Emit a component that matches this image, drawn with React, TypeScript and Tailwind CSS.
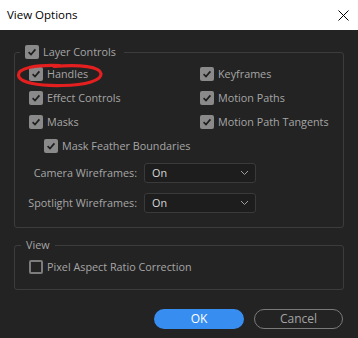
import React from "react";

const font = { fontFamily: '"Open Sans", "Noto Sans", sans-serif' };

function Check({ checked = true }: { checked?: boolean }) {
  if (!checked) {
    return <span className="block w-[14px] h-[14px] rounded-[2px] border-2 border-[#7c7c7c] shrink-0" />;
  }
  return (
    <span className="flex items-center justify-center w-[14px] h-[14px] rounded-[2px] bg-[#8a8a8a] shrink-0">
      <svg width="10" height="10" viewBox="0 0 10 10">
        <path d="M1.6 5.2 L4 7.5 L8.4 2.4" fill="none" stroke="#1e1e1e" strokeWidth="1.7" />
      </svg>
    </span>
  );
}

function Row({ label, indent = false }: { label: string; indent?: boolean }) {
  return (
    <div className={`flex items-center h-6 gap-[4px] whitespace-nowrap ${indent ? "pl-[15px]" : ""}`}>
      <Check />
      <span>{label}</span>
    </div>
  );
}

function Select({ label }: { label: string }) {
  return (
    <div className="flex items-center h-5 whitespace-nowrap">
      <span className="w-[123px] text-right pr-[1px]">{label}</span>
      <div className="ml-[6px] w-[112px] h-5 rounded-[3px] border border-[#3a3a3a] bg-[#1d1d1d] flex items-center justify-between pl-[7px] pr-[6px]">
        <span className="text-[#d8d8d8]">On</span>
        <svg width="9" height="6" viewBox="0 0 9 6">
          <path d="M1 1 L4.5 4.5 L8 1" fill="none" stroke="#a0a0a0" strokeWidth="1" />
        </svg>
      </div>
    </div>
  );
}

export default function App() {
  return (
    <div className="w-[358px] h-[338px] bg-[#232323] flex flex-col text-[10.8px] text-[#a6a6a6] overflow-hidden" style={font}>
      <div className="h-[30px] bg-white flex items-center justify-between pl-[7px] pr-[9px] text-black">
        <span className="text-[11.5px]">View Options</span>
        <svg width="11" height="11" viewBox="0 0 11 11">
          <path d="M0.5 0.5 L10.5 10.5 M10.5 0.5 L0.5 10.5" stroke="#000" strokeWidth="1" />
        </svg>
      </div>
      <div className="flex flex-col px-[14px] pt-[15px]">
        <div className="relative">
          <fieldset className="border border-[#3c3c3c] rounded-[3px] pl-[14px] pr-[14px] pb-[14px] m-0">
            <legend className="-ml-[9px] pl-[5px] pr-[8px] h-[14px]">
              <span className="flex items-center gap-[4px] h-[14px] whitespace-nowrap">
                <Check />
                <span>Layer Controls</span>
              </span>
            </legend>
            <div className="pt-[3px] grid grid-cols-[171px_1fr]">
              <div className="flex flex-col">
                <Row label="Handles" />
                <Row label="Effect Controls" />
                <Row label="Masks" />
              </div>
              <div className="flex flex-col">
                <Row label="Keyframes" />
                <Row label="Motion Paths" />
                <Row label="Motion Path Tangents" />
              </div>
            </div>
            <Row label="Mask Feather Boundaries" indent />
            <div className="-ml-[14px] mt-[5px] flex flex-col gap-[10px]">
              <Select label="Camera Wireframes:" />
              <Select label="Spotlight Wireframes:" />
            </div>
          </fieldset>
          <svg className="absolute left-[2px] top-[17px] pointer-events-none" width="90" height="27" viewBox="0 0 90 27">
            <path d="M44 3.5 C 20 2.5, 2.5 6, 2.5 13 C 2.5 20.5, 22 24, 46 23.5 C 70 23, 86 18.5, 85 11.5 C 84 5, 65 2, 38 4.5" fill="none" stroke="#e3201f" strokeWidth="3.2" strokeLinecap="round" />
          </svg>
        </div>
        <fieldset className="mt-[10px] border border-[#3c3c3c] rounded-[3px] pl-[14px] pb-[10px] m-0">
          <legend className="-ml-[8px] px-[5px] h-[14px] leading-[14px]">View</legend>
          <div className="pt-[3px]">
            <div className="flex items-center h-6 gap-[4px]">
              <Check checked={false} />
              <span>Pixel Aspect Ratio Correction</span>
            </div>
          </div>
        </fieldset>
        <div className="mt-[19px] flex justify-end gap-[10px] pr-[1px]">
          <button className="w-[90px] h-5 rounded-full bg-[#378ef0] text-white text-[12px] leading-none">OK</button>
          <button className="w-[89px] h-5 rounded-full border border-[#7a7a7a] text-[#a3a3a3] text-[12px] leading-none">Cancel</button>
        </div>
      </div>
    </div>
  );
}
